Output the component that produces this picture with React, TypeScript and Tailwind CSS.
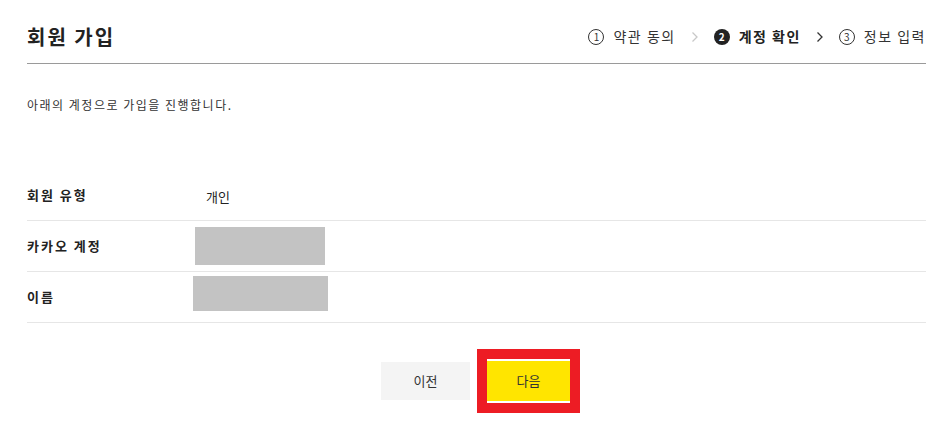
const font = { fontFamily: '"Noto Sans CJK KR", "Noto Sans", sans-serif' }

function Step({ n, label, active }: { n: number; label: string; active?: boolean }) {
  return (
    <div className="flex items-center gap-[9px]">
      {active ? (
        <span className="flex h-[16px] w-[16px] items-center justify-center rounded-full bg-[#222] text-[10px] font-bold leading-none text-white">
          {n}
        </span>
      ) : (
        <span className="flex h-[16px] w-[16px] items-center justify-center rounded-full border border-[#333] text-[10px] leading-none text-[#333]">
          {n}
        </span>
      )}
      <span
        className={
          active
            ? 'text-[14px] font-bold tracking-[1.5px] text-[#222]'
            : 'text-[14px] tracking-[1.5px] text-[#333]'
        }
      >
        {label}
      </span>
    </div>
  )
}

function Chevron({ light }: { light?: boolean }) {
  return (
    <svg width="8" height="12" viewBox="0 0 8 12" className="mx-[15px]">
      <path d="M1.5 1.5L6 6l-4.5 4.5" fill="none" stroke={light ? '#c8c8c8' : '#333'} strokeWidth="1.3" />
    </svg>
  )
}

function Row({ label, children }: { label: string; children: React.ReactNode }) {
  return (
    <div className="flex h-[51px] items-center border-b border-[#e6e6e6]">
      <div className="w-[166px] text-[13px] font-bold tracking-[2px] text-[#222]">{label}</div>
      <div className="flex-1">{children}</div>
    </div>
  )
}

export default function App() {
  return (
    <div className="h-[438px] w-[949px] bg-white" style={font}>
      <div className="ml-[27px] w-[899px]">
        <div className="flex h-[64px] items-center justify-between border-b border-[#9a9a9a] pt-[10px]">
          <h1 className="text-[20px] font-bold tracking-[2px] text-[#222]">회원 가입</h1>
          <div className="flex items-center">
            <Step n={1} label="약관 동의" />
            <Chevron light />
            <Step n={2} label="계정 확인" active />
            <Chevron />
            <Step n={3} label="정보 입력" />
          </div>
        </div>
        <p className="mt-[32px] text-[12px] tracking-[1.5px] text-[#333]">아래의 계정으로 가입을 진행합니다.</p>
        <div className="mt-[56px]">
          <Row label="회원 유형">
            <span className="ml-[13px] text-[13px] text-[#222]">개인</span>
          </Row>
          <Row label="카카오 계정">
            <div className="ml-[2px] h-[38px] w-[130px] bg-[#c3c3c3]" />
          </Row>
          <Row label="이름">
            <div className="mb-[8px] h-[35px] w-[135px] bg-[#c3c3c3]" />
          </Row>
        </div>
        <div className="mt-[26px] flex items-center justify-center gap-[7px] pl-[8px]">
          <button className="h-[38px] w-[89px] bg-[#f4f4f4] text-[13px] text-[#333]">이전</button>
          <div className="bg-[#ed1c24] px-[10px] py-[10px]">
            <div className="bg-white py-[2px]">
              <button className="block h-[40px] w-[83px] bg-[#ffe500] text-[13px] text-[#333]">다음</button>
            </div>
          </div>
        </div>
      </div>
    </div>
  )
}
